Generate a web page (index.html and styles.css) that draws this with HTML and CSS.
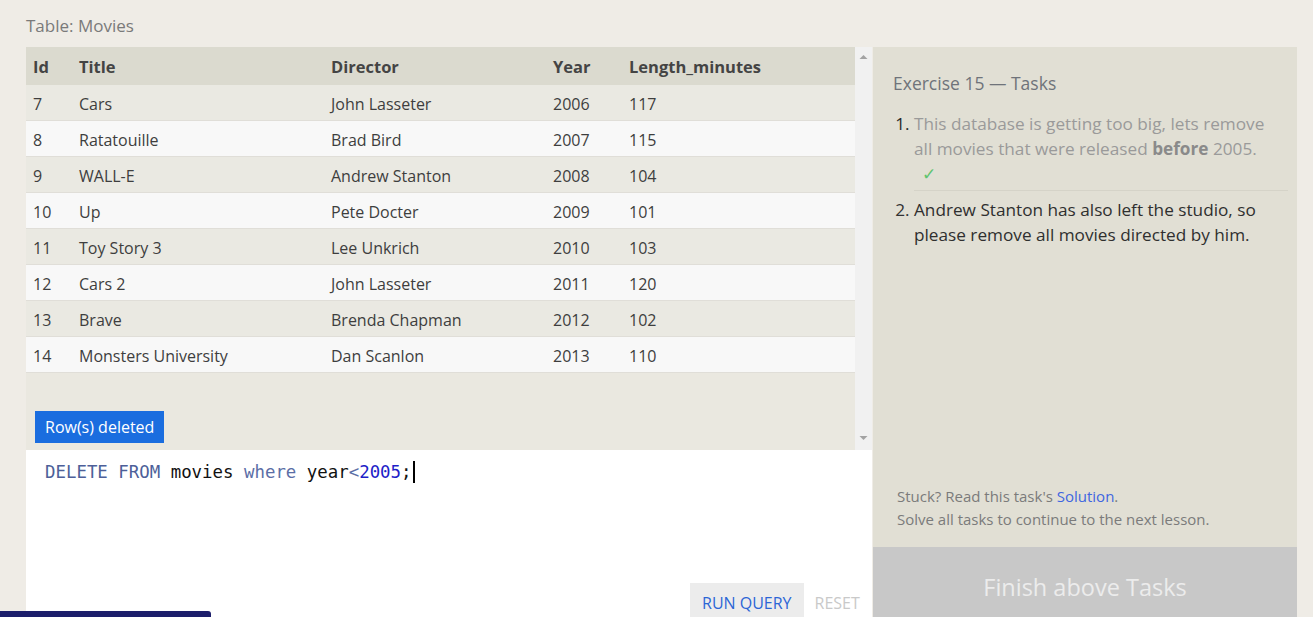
FILE: index.html
```html
<!DOCTYPE html>
<html>
<head>
<meta charset="utf-8">
<link rel="stylesheet" href="styles.css">
</head>
<body>
<div class="page">
  <div class="caption">Table: Movies</div>
  <div class="layout">
    <div class="left">
      <div class="results">
        <div class="results-scroll">
          <div class="table">
            <div class="row head"><div>Id</div><div>Title</div><div>Director</div><div>Year</div><div>Length_minutes</div></div>
            <div class="row"><div>7</div><div>Cars</div><div>John Lasseter</div><div>2006</div><div>117</div></div>
            <div class="row"><div>8</div><div>Ratatouille</div><div>Brad Bird</div><div>2007</div><div>115</div></div>
            <div class="row"><div>9</div><div>WALL-E</div><div>Andrew Stanton</div><div>2008</div><div>104</div></div>
            <div class="row"><div>10</div><div>Up</div><div>Pete Docter</div><div>2009</div><div>101</div></div>
            <div class="row"><div>11</div><div>Toy Story 3</div><div>Lee Unkrich</div><div>2010</div><div>103</div></div>
            <div class="row"><div>12</div><div>Cars 2</div><div>John Lasseter</div><div>2011</div><div>120</div></div>
            <div class="row"><div>13</div><div>Brave</div><div>Brenda Chapman</div><div>2012</div><div>102</div></div>
            <div class="row"><div>14</div><div>Monsters University</div><div>Dan Scanlon</div><div>2013</div><div>110</div></div>
          </div>
          <div class="status"><span class="status-btn">Row(s) deleted</span></div>
        </div>
        <div class="scrollbar">
          <svg width="17" height="20" viewBox="0 0 17 20"><path d="M4.5 12 L8.5 8 L12.5 12 Z" fill="#a3a3a3"/></svg>
          <svg width="17" height="20" viewBox="0 0 17 20"><path d="M4.5 8 L8.5 12 L12.5 8 Z" fill="#a3a3a3"/></svg>
        </div>
      </div>
      <div class="editor">
        <div class="code"><span class="kw">DELETE</span> <span class="kw">FROM</span> movies <span class="kw2">where</span> year<span class="op">&lt;</span><span class="num">2005</span>;<span class="cursor"></span></div>
        <div class="actions">
          <span class="run">RUN QUERY</span>
          <span class="reset">RESET</span>
        </div>
      </div>
    </div>
    <div class="right">
      <div class="tasks">
        <h2 class="tasks-title">Exercise 15 — Tasks</h2>
        <ol class="task-list">
          <li class="task done">This database is getting too big, lets remove all movies that were released <b>before</b> 2005.<div class="check">✓</div></li>
          <li class="task">Andrew Stanton has also left the studio, so please remove all movies directed by him.</li>
        </ol>
        <div class="help">
          <div>Stuck? Read this task's <a class="link">Solution</a>.</div>
          <div>Solve all tasks to continue to the next lesson.</div>
        </div>
      </div>
      <div class="finish">Finish above Tasks</div>
    </div>
  </div>
</div>
<div class="navbar"></div>
</body>
</html>
```
FILE: styles.css
```css
html, body {
  margin: 0;
  padding: 0;
  height: 100%;
  overflow: hidden;
}
body {
  background: #efece6;
  font-family: "Open Sans", "Liberation Sans", sans-serif;
  color: #3f3f3f;
}
.page {
  padding: 13px 16px 0 26px;
}
.caption {
  font-size: 17px;
  color: #7a7a7a;
  line-height: 26px;
  height: 34px;
}
.layout {
  display: flex;
  align-items: flex-start;
}
.left {
  width: 846px;
  display: flex;
  flex-direction: column;
}
.results {
  display: flex;
  height: 403px;
  background: #eae8e0;
}
.results-scroll {
  width: 829px;
  display: flex;
  flex-direction: column;
  justify-content: space-between;
}
.row {
  display: grid;
  grid-template-columns: 46px 252px 222px 76px 1fr;
  box-sizing: border-box;
  height: 36px;
  padding-top: 3px;
  line-height: 32px;
  border-bottom: 1px solid #e0ded8;
  background: #eae9e2;
  font-size: 16px;
  color: #3e3e3e;
}
.row > div {
  padding-left: 7px;
  white-space: nowrap;
}
.row:nth-child(odd) {
  background: #f8f8f8;
}
.row.head {
  background: #dbdacf;
  height: 38px;
  padding-top: 0;
  line-height: 40px;
  border-bottom: none;
  font-weight: 700;
  font-size: 16.5px;
  color: #444;
}
.status {
  padding: 0 0 7px 9px;
}
.status-btn {
  display: inline-block;
  background: #1a6ddf;
  color: #fff;
  font-size: 16px;
  line-height: 32px;
  height: 32px;
  padding: 0 10px;
}
.scrollbar {
  width: 17px;
  background: #f1f1f1;
  display: flex;
  flex-direction: column;
  justify-content: space-between;
  padding: 0 0 2px;
}
.scrollbar svg {
  display: block;
}
.editor {
  background: #fff;
  height: 190px;
  position: relative;
}
.code {
  font-family: "DejaVu Sans Mono", "Liberation Mono", monospace;
  font-size: 17.4px;
  padding: 10px 0 0 19px;
  line-height: 24px;
  color: #111;
  white-space: pre;
}
.kw { color: #4d5f99; }
.kw2 { color: #5b6ea6; }
.op { color: #5b6ea6; }
.num { color: #1e1ec8; }
.cursor {
  display: inline-block;
  width: 2px;
  height: 22px;
  background: #000;
  margin-left: 1px;
  vertical-align: -5px;
}
.actions {
  position: absolute;
  left: 664px;
  top: 133px;
  display: flex;
  align-items: center;
  font-size: 16px;
}
.run {
  background: #ececec;
  color: #2c66d6;
  padding: 0 12px;
  height: 40px;
  line-height: 40px;
}
.reset {
  color: #c9c9c9;
  padding-left: 11px;
  line-height: 40px;
}
.right {
  width: 424px;
  margin-left: 1px;
  display: flex;
  flex-direction: column;
}
.tasks {
  background: #e1dfd4;
  height: 500px;
  padding: 0 9px 0 20px;
  box-sizing: border-box;
  display: flex;
  flex-direction: column;
}
.tasks-title {
  margin: 23px 0 0;
  font-weight: 400;
  font-size: 17.5px;
  color: #6f737a;
  line-height: 26px;
}
.task-list {
  margin: 15px 0 0;
  padding: 0 0 0 21px;
  font-size: 17.2px;
  line-height: 25px;
}
.task {
  color: #2f2f2f;
  padding-right: 10px;
}
.task::marker {
  color: #333;
}
.task.done {
  color: #9a9a9a;
  border-bottom: 1px solid #d5d3c8;
  padding-bottom: 3px;
  margin-bottom: 6px;
}
.task.done::marker {
  color: #2a2a2a;
}
.task b {
  color: #8a8a8a;
}
.check {
  color: #5fc46f;
  padding-left: 8px;
  font-size: 17px;
  line-height: 26px;
}
.help {
  margin-top: auto;
  padding: 0 0 16px 4px;
  font-size: 15px;
  line-height: 23px;
  color: #7b7b7b;
}
.link {
  color: #3f66e0;
}
.finish {
  background: #c8c8c8;
  color: #ececec;
  text-align: center;
  font-size: 23.5px;
  height: 80px;
  line-height: 80px;
}
.navbar {
  position: fixed;
  left: 0;
  bottom: 0;
  width: 211px;
  height: 6px;
  background: #1c1e6b;
  border-top-right-radius: 3px;
}
```
